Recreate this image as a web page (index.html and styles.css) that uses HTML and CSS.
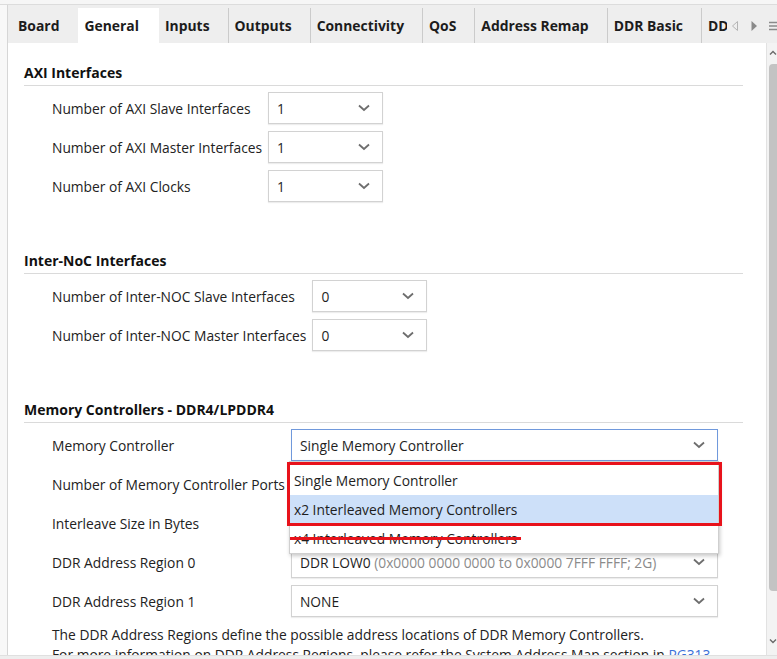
FILE: index.html
```html
<!DOCTYPE html>
<html lang="en">
<head>
<meta charset="utf-8">
<title>NoC Configuration - General</title>
<link rel="stylesheet" href="styles.css">
</head>
<body>
<div class="window">
  <div class="top-strip"></div>
  <div class="frame">
    <div class="tabbar">
      <div class="tabs">
        <div class="tab tab-first">Board</div>
        <div class="tab active">General</div>
        <div class="tab">Inputs</div>
        <div class="tab">Outputs</div>
        <div class="tab">Connectivity</div>
        <div class="tab">QoS</div>
        <div class="tab">Address Remap</div>
        <div class="tab">DDR Basic</div>
        <div class="tab">DDR Memory</div>
      </div>
      <div class="tab-nav">
        <svg class="nav-icon" width="8" height="12" viewBox="0 0 8 12"><path d="M6.5 1.5 L1.5 6 L6.5 10.5 Z" fill="none" stroke="#b4b4b4" stroke-width="1"/></svg>
        <svg class="nav-icon" width="8" height="12" viewBox="0 0 8 12"><path d="M1.5 1 L7 6 L1.5 11 Z" fill="#8a8a8a"/></svg>
        <svg class="nav-icon" width="10" height="12" viewBox="0 0 10 12"><path d="M0 2.5 H10 M0 6 H10 M0 9.5 H10" stroke="#8a8a8a" stroke-width="1.6"/></svg>
      </div>
    </div>

    <div class="panel">
      <div class="content">
        <section class="group">
          <h2 class="group-title">AXI Interfaces</h2>
          <div class="fields fields-short">
            <div class="field-label">Number of AXI Slave Interfaces</div>
            <div class="select"><span class="select-value">1</span><svg class="chevron" width="12" height="8" viewBox="0 0 12 8"><path d="M1 1.5 L6 6 L11 1.5" fill="none" stroke="#6e6e6e" stroke-width="1.8"/></svg></div>
            <div class="field-label">Number of AXI Master Interfaces</div>
            <div class="select"><span class="select-value">1</span><svg class="chevron" width="12" height="8" viewBox="0 0 12 8"><path d="M1 1.5 L6 6 L11 1.5" fill="none" stroke="#6e6e6e" stroke-width="1.8"/></svg></div>
            <div class="field-label">Number of AXI Clocks</div>
            <div class="select"><span class="select-value">1</span><svg class="chevron" width="12" height="8" viewBox="0 0 12 8"><path d="M1 1.5 L6 6 L11 1.5" fill="none" stroke="#6e6e6e" stroke-width="1.8"/></svg></div>
          </div>
        </section>

        <section class="group">
          <h2 class="group-title">Inter-NoC Interfaces</h2>
          <div class="fields fields-short">
            <div class="field-label">Number of Inter-NOC Slave Interfaces</div>
            <div class="select"><span class="select-value">0</span><svg class="chevron" width="12" height="8" viewBox="0 0 12 8"><path d="M1 1.5 L6 6 L11 1.5" fill="none" stroke="#6e6e6e" stroke-width="1.8"/></svg></div>
            <div class="field-label">Number of Inter-NOC Master Interfaces</div>
            <div class="select"><span class="select-value">0</span><svg class="chevron" width="12" height="8" viewBox="0 0 12 8"><path d="M1 1.5 L6 6 L11 1.5" fill="none" stroke="#6e6e6e" stroke-width="1.8"/></svg></div>
          </div>
        </section>

        <section class="group group-memory">
          <h2 class="group-title">Memory Controllers - DDR4/LPDDR4</h2>
          <div class="fields fields-wide">
            <div class="field-label">Memory Controller</div>
            <div class="select select-open">
              <span class="select-value">Single Memory Controller</span>
              <svg class="chevron" width="12" height="8" viewBox="0 0 12 8"><path d="M1 1.5 L6 6 L11 1.5" fill="none" stroke="#6e6e6e" stroke-width="1.8"/></svg>
              <ul class="popup">
                <li class="option">Single Memory Controller</li>
                <li class="option option-hover">x2 Interleaved Memory Controllers</li>
                <li class="option option-struck">x4 Interleaved Memory Controllers</li>
                <li class="mark-box"></li>
              </ul>
            </div>
            <div class="field-label">Number of Memory Controller Ports</div>
            <div class="select"><span class="select-value">1</span><svg class="chevron" width="12" height="8" viewBox="0 0 12 8"><path d="M1 1.5 L6 6 L11 1.5" fill="none" stroke="#6e6e6e" stroke-width="1.8"/></svg></div>
            <div class="field-label">Interleave Size in Bytes</div>
            <div class="select"><span class="select-value">128</span><svg class="chevron" width="12" height="8" viewBox="0 0 12 8"><path d="M1 1.5 L6 6 L11 1.5" fill="none" stroke="#6e6e6e" stroke-width="1.8"/></svg></div>
            <div class="field-label">DDR Address Region 0</div>
            <div class="select"><span class="select-value">DDR LOW0 <span class="muted">(0x0000 0000 0000 to 0x0000 7FFF FFFF; 2G)</span></span><svg class="chevron" width="12" height="8" viewBox="0 0 12 8"><path d="M1 1.5 L6 6 L11 1.5" fill="none" stroke="#6e6e6e" stroke-width="1.8"/></svg></div>
            <div class="field-label">DDR Address Region 1</div>
            <div class="select"><span class="select-value">NONE</span><svg class="chevron" width="12" height="8" viewBox="0 0 12 8"><path d="M1 1.5 L6 6 L11 1.5" fill="none" stroke="#6e6e6e" stroke-width="1.8"/></svg></div>
          </div>
          <p class="note">The DDR Address Regions define the possible address locations of DDR Memory Controllers.<br>For more information on DDR Address Regions, please refer the System Address Map section in <a class="link" href="#">PG313</a>.</p>
        </section>
      </div>

      <div class="scrollbar">
        <div class="scroll-btn">
          <svg width="8" height="6" viewBox="0 0 8 6"><path d="M1 4.5 L4 1.5 L7 4.5" fill="none" stroke="#6a6a6a" stroke-width="1.4"/></svg>
        </div>
        <div class="scroll-thumb"></div>
        <div class="scroll-btn scroll-btn-down">
          <svg width="8" height="6" viewBox="0 0 8 6"><path d="M1 1.5 L4 4.5 L7 1.5" fill="none" stroke="#6a6a6a" stroke-width="1.4"/></svg>
        </div>
      </div>
    </div>
  </div>
  <div class="status-strip"></div>
</div>
</body>
</html>
```

FILE: styles.css
```css
* {
  box-sizing: border-box;
}

html, body {
  margin: 0;
  padding: 0;
}

body {
  width: 777px;
  height: 659px;
  overflow: hidden;
  background: #f8f8f8;
  font-family: "Open Sans", "Noto Sans", sans-serif;
  font-size: 13.8px;
  color: #1e1e1e;
}

.window {
  display: flex;
  flex-direction: column;
  height: 659px;
}

.top-strip {
  height: 5px;
  background: #f6f6f6;
  border-bottom: 1px solid #dcdcdc;
}

.frame {
  margin-left: 7px;
  border-left: 1px solid #d6d6d6;
  display: flex;
  flex-direction: column;
}

/* ---- tab strip ---- */
.tabbar {
  height: 38px;
  background: #eeeeee;
  display: flex;
}

.tabs {
  width: 719px;
  flex: none;
  display: flex;
  overflow: hidden;
  padding-top: 3px;
}

.tab {
  flex: none;
  height: 35px;
  line-height: 35px;
  padding: 0 18px 0 6px;
  border-right: 1px solid #cbcbcb;
  font-weight: 700;
  font-size: 13.9px;
  color: #1c1c1c;
  white-space: nowrap;
}

.tab-first {
  padding-left: 10px;
  padding-right: 18px;
  border-right-color: transparent;
}

.tab.active {
  background: #ffffff;
  border-right-color: transparent;
  padding-right: 19px;
}

.tab-nav {
  flex: 1;
  display: flex;
  align-items: center;
  gap: 11px;
  padding-left: 4px;
  padding-top: 4px;
}

.nav-icon {
  flex: none;
}

/* ---- body panel ---- */
.panel {
  height: 612px;
  background: #ffffff;
  display: flex;
}

.content {
  flex: 1;
  overflow: hidden;
  padding: 20px 23px 0 16px;
}

.group + .group {
  margin-top: 49px;
}

.group-title {
  margin: 0;
  font-size: 14px;
  font-weight: 700;
  line-height: 20px;
  padding-bottom: 2px;
  border-bottom: 1px solid #dadada;
  color: #111111;
}

.fields {
  display: grid;
  grid-template-rows: 32px;
  grid-auto-rows: 32px;
  row-gap: 7px;
  column-gap: 6px;
  align-items: center;
  margin: 6px 0 0 28px;
}

.fields-short {
  grid-template-columns: max-content 115px;
}

.fields-wide {
  grid-template-columns: max-content 427px;
}

.field-label {
  white-space: nowrap;
  color: #222222;
}

.select {
  position: relative;
  height: 32px;
  border: 1px solid #d2d2d2;
  box-shadow: 0 1px 1px rgba(0, 0, 0, 0.07);
  background: #ffffff;
  display: flex;
  align-items: center;
  padding: 0 12px 0 8px;
  white-space: nowrap;
}

.select-value {
  flex: 1;
  color: #1e1e1e;
}

.muted {
  color: #8b8b8b;
}

.chevron {
  flex: none;
}

.select-open {
  border-color: #7099dc;
}

/* ---- open drop-down list ---- */
.popup {
  position: absolute;
  top: 31px;
  left: -3px;
  right: -2px;
  margin: 0;
  padding: 4px 0 0;
  list-style: none;
  background: #ffffff;
  border: 1px solid #cfcfcf;
  box-shadow: 1px 2px 4px rgba(0, 0, 0, 0.22);
  z-index: 5;
}

.option {
  height: 29px;
  line-height: 29px;
  padding-left: 4px;
  color: #1e1e1e;
}

.option-hover {
  background: #cde0f9;
}

.option-struck {
  position: relative;
}

.option-struck::after {
  content: "";
  position: absolute;
  left: 0;
  width: 231px;
  top: 13px;
  height: 3px;
  background: #e8121b;
}

.mark-box {
  position: absolute;
  top: 0;
  left: -3px;
  right: -4px;
  height: 64px;
  border: 3px solid #e8121b;
}

.note {
  margin: 8px 0 0 28px;
  line-height: 20px;
  color: #222222;
  white-space: nowrap;
}

.link {
  color: #3a6fd8;
  text-decoration: none;
}

/* ---- vertical scroll bar ---- */
.scrollbar {
  width: 11px;
  flex: none;
  background: #f3f3f3;
  border-left: 1px solid #e2e2e2;
  display: flex;
  flex-direction: column;
}

.scroll-btn {
  height: 17px;
  display: flex;
  align-items: center;
  padding-left: 2px;
  padding-top: 2px;
}

.scroll-thumb {
  height: 527px;
  margin: 4px 0 0 2px;
  background: #c3c3c3;
  border-radius: 4px 0 0 4px;
}

.scroll-btn-down {
  margin-top: auto;
  height: 22px;
  padding-top: 0;
  padding-bottom: 6px;
}

.status-strip {
  flex: 1;
  background: #eeeeee;
  border-top: 1px solid #e0e0e0;
}
```
